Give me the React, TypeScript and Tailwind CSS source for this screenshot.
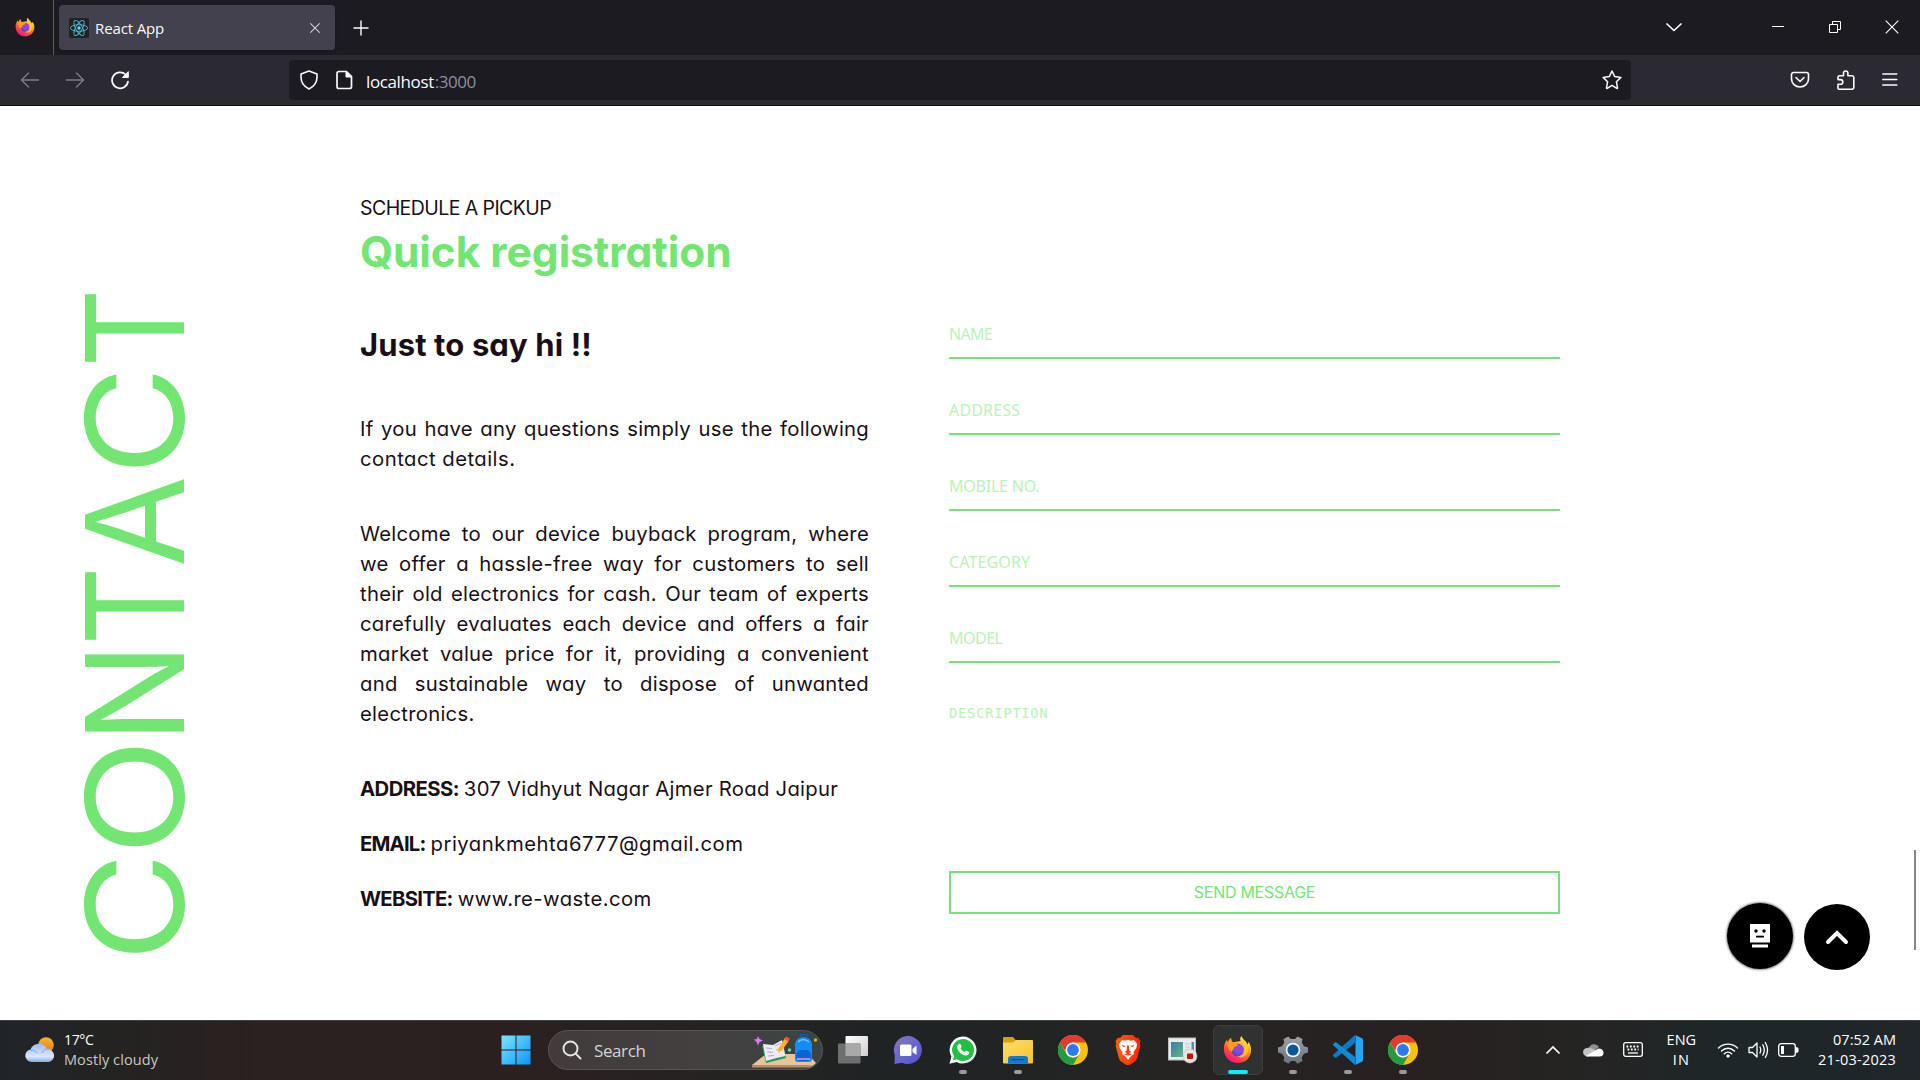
import { useLayoutEffect, useRef, useState } from "react";
import type { ReactNode } from "react";

/* One line of text whose tracking is adjusted so that it spans `w` pixels. */
function Fit({ w, className = "", children }: { w: number; className?: string; children: string }) {
  const ref = useRef<HTMLSpanElement>(null);
  const [ls, setLs] = useState(0);
  useLayoutEffect(() => {
    const el = ref.current;
    if (!el) return;
    el.style.letterSpacing = "0px";
    const next = (w - el.offsetWidth) / Math.max(1, children.length - 1);
    el.style.letterSpacing = next + "px";
    setLs(next);
  }, [w, children]);
  return (
    <span ref={ref} className={"inline-block whitespace-nowrap " + className} style={{ letterSpacing: ls }}>
      {children}
    </span>
  );
}

function Firefox({ size, id }: { size: number; id: string }) {
  return (
    <svg width={size} height={size} viewBox="0 0 32 32">
      <defs>
        <linearGradient id={id + "a"} x1="0.8" y1="0.05" x2="0.25" y2="1">
          <stop offset="0" stopColor="#fff44f" />
          <stop offset="0.3" stopColor="#ffb21f" />
          <stop offset="0.55" stopColor="#ff6b2c" />
          <stop offset="0.8" stopColor="#ff2d5c" />
          <stop offset="1" stopColor="#e31587" />
        </linearGradient>
        <radialGradient id={id + "b"} cx="0.6" cy="0.3" r="0.8">
          <stop offset="0" stopColor="#b833e1" />
          <stop offset="0.5" stopColor="#7a4ee8" />
          <stop offset="1" stopColor="#4a3fb5" />
        </radialGradient>
      </defs>
      <path
        d="M20.5 1c-2 2-1.8 4-1 5.600L11 8C9 6 9 4 9 3 7 4.500 6 6 5.600 7.800 4.700 7 4.500 6 4.500 5 1.500 8.500.8 12.500 1 16c.4 9 7 15 15.200 15C25 31 31 24.500 31 16.500c0-4-1.400-7-3-9-.1 1.500-.4 2.400-.8 3C25.500 6 21.500 5 20.500 1Z"
        fill={"url(#" + id + "a)"}
      />
      <circle cx="16" cy="16.500" r="7" fill={"url(#" + id + "b)"} />
      <path d="M5 9c2-2 5-1.500 6.500.5 2-.5 4 0 5 1-1 2.500-3.500 2-4.500 3.500-.8 1.200.2 2-1 2.500-1 .6-1.500 1-1.200 2C7 17 5 13 5 9Z" fill="#ff9a1f" />
      <path d="M20 7c3 2 4 5 3.500 9 0 5-4 8-8 7.500 6 3.500 12.500-1 12-8C27.200 10 23 9.500 20 7Z" fill="#ffcf35" opacity=".75" />
    </svg>
  );
}

function ReactLogo() {
  return (
    <svg width="20" height="20" viewBox="0 0 20 20">
      <rect width="20" height="20" rx="1.500" fill="#222222" />
      <g fill="none" stroke="#4fb9d6" strokeWidth="0.9">
        <ellipse cx="10" cy="10" rx="8.600" ry="3.300" />
        <ellipse cx="10" cy="10" rx="8.600" ry="3.300" transform="rotate(60 10 10)" />
        <ellipse cx="10" cy="10" rx="8.600" ry="3.300" transform="rotate(120 10 10)" />
      </g>
      <circle cx="10" cy="10" r="1.700" fill="#61dafb" />
    </svg>
  );
}

function Stroke({ size = 20, sw = 1.5, color = "#fbfbfe", children }: { size?: number; sw?: number; color?: string; children: ReactNode }) {
  return (
    <svg className="shrink-0" width={size} height={size} viewBox="0 0 20 20" fill="none" stroke={color} strokeWidth={sw} strokeLinecap="round" strokeLinejoin="round">
      {children}
    </svg>
  );
}

function TabBar() {
  return (
    <div className="flex h-[55px] items-center bg-[#1c1b22]">
      <div className="flex h-full w-[54px] items-center justify-center border-r border-[#5b5a63] pr-1">
        <div className="-mt-0.5">
          <Firefox size={20} id="f1" />
        </div>
      </div>
      <div className="ml-[5px] flex h-[45px] w-[276px] items-center rounded bg-[#42414d] pr-3 pl-2.5 shadow">
        <ReactLogo />
        <Fit w={69} className="mt-0.5 ml-1.5 font-['Open_Sans'] text-[15px] text-[#fbfbfe]">React App</Fit>
        <div className="ml-auto">
          <Stroke size={16} sw={1.3} color="#d0d0d8">
            <path d="M4.500 4.500l11 11M15.500 4.500l-11 11" />
          </Stroke>
        </div>
      </div>
      <div className="ml-[16px]">
        <Stroke sw={1.4}>
          <path d="M10 3v14M3 10h14" />
        </Stroke>
      </div>
      <div className="ml-auto flex items-center pr-[21px] pb-px">
        <Stroke size={20} sw={1.7}>
          <path d="M3 7l7 6.500L17 7" />
        </Stroke>
        <svg className="ml-[87px]" width="14" height="14" viewBox="0 0 14 14" stroke="#fff" fill="none">
          <path d="M1 6.500h12" />
        </svg>
        <svg className="ml-[43px]" width="14" height="14" viewBox="0 0 14 14" stroke="#fff" fill="none">
          <path d="M1.500 4.500h8v8h-8zM4.500 4V1.500h8v8H10" />
        </svg>
        <svg className="ml-[43px]" width="14" height="14" viewBox="0 0 14 14" stroke="#fff" fill="none" strokeWidth="1.100">
          <path d="M.7.7l12.600 12.600M13.300.7L.7 13.300" />
        </svg>
      </div>
    </div>
  );
}

function ToolBar() {
  return (
    <div className="flex h-[51px] items-center border-b border-[#0c0c0d] bg-[#2b2a33] pr-5 pl-5">
      <Stroke color="#7d7c84" sw={1.4}>
        <path d="M1.500 10h17M8.500 3l-7 7 7 7" />
      </Stroke>
      <div className="ml-[25px]">
        <Stroke color="#7d7c84" sw={1.4}>
          <path d="M1.500 10h17M11.500 3l7 7-7 7" />
        </Stroke>
      </div>
      <div className="ml-[25px]">
        <Stroke sw={1.7}>
          <path d="M18 11.500A8 8 0 1 1 15.600 4.500" />
          <path d="M18.300 2v5.500h-5.500z" fill="#fbfbfe" strokeWidth="1" />
        </Stroke>
      </div>
      <div className="ml-[159px] flex h-10 w-[1342px] items-center rounded bg-[#1c1b22] pr-[9px] pl-[10px]">
        <Stroke sw={1.6}>
          <path d="M10 1L18 4v3c0 5.500-3 9.500-8 12-5-2.500-8-6.500-8-12V4z" />
        </Stroke>
        <div className="ml-[15px]">
          <Stroke sw={1.7}>
            <path d="M5 1.500h7.500l5 5V16.500a2 2 0 0 1-2 2H5a2 2 0 0 1-2-2v-13a2 2 0 0 1 2-2z" />
            <path d="M12 1.500v5.500h5.500z" fill="#fbfbfe" strokeWidth="1" />
          </Stroke>
        </div>
        <span className="mt-[3px] ml-[12px] flex font-['Open_Sans'] text-[17px]">
          <Fit w={68} className="text-[#fbfbfe]">localhost</Fit>
          <Fit w={41} className="ml-px text-[#8f8f98]">:3000</Fit>
        </span>
        <div className="ml-auto">
          <Stroke sw={1.5}>
            <path d="M10 1l2.700 5.600 6.200.8-4.500 4.300 1.100 6.100c.1.500-.3.700-.7.500L10 15.400l-4.800 2.900c-.4.200-.8 0-.7-.5l1.100-6.100L1.100 7.400l6.200-.8z" />
          </Stroke>
        </div>
      </div>
      <div className="ml-[159px]">
        <Stroke sw={1.6}>
          <path d="M3.500 2.500h13a2 2 0 0 1 2 2V9a8.500 8 0 0 1-17 0V4.500a2 2 0 0 1 2-2z" />
          <path d="M6 7.500l4 4 4-4" />
        </Stroke>
      </div>
      <div className="ml-[26px]">
        <Stroke sw={1.6}>
          <path d="M3.500 5.800h4V3.200a2.200 2.200 0 0 1 4.400 0v2.600H16a1.800 1.800 0 0 1 1.800 1.800v9.800a1.800 1.800 0 0 1-1.800 1.800H3.300a1.300 1.300 0 0 1-1.300-1.300v-3.700h2.500a2.200 2.200 0 0 0 0-4.600H2V7.300a1.500 1.500 0 0 1 1.500-1.500z" />
        </Stroke>
      </div>
      <div className="ml-[24px]">
        <Stroke sw={1.5}>
          <path d="M2.800 4h14M2.800 9.500h14M2.800 15h14" />
        </Stroke>
      </div>
    </div>
  );
}

const paragraph = [
  "Welcome to our device buyback program, where",
  "we offer a hassle-free way for customers to sell",
  "their old electronics for cash. Our team of experts",
  "carefully evaluates each device and offers a fair",
  "market value price for it, providing a convenient",
  "and sustainable way to dispose of unwanted",
];

const fields: [string, number][] = [
  ["NAME", 44],
  ["ADDRESS", 71],
  ["MOBILE NO.", 91],
  ["CATEGORY", 81],
  ["MODEL", 54],
];

function Line({ children }: { children: string }) {
  return <div className="h-[30px] tracking-[0.25px] whitespace-nowrap [text-align-last:justify]">{children}</div>;
}

function Detail({ label, lw, value, vw }: { label: string; lw: number; value: string; vw: number }) {
  return (
    <div className="flex h-[55px] items-start">
      <Fit w={lw} className="font-bold">{label}</Fit>
      <Fit w={vw} className="ml-[5px]">{value}</Fit>
    </div>
  );
}

function Contact() {
  return (
    <main className="flex h-[914px] bg-white text-[#1a0f16] font-['Inter',sans-serif] [font-feature-settings:'cv11']">
      <div className="mt-[179px] ml-[82px] flex h-[680px] w-[103px] items-center justify-center">
        <div className="flex w-[680px] shrink-0 -rotate-90 text-[136px] leading-[103px] font-[380] text-[#72e572]">
          <span className="flex w-[117px] shrink-0 scale-x-[1.1] justify-center">C</span>
          <span className="flex w-[103px] shrink-0 scale-x-[1.12] justify-center">O</span>
          <span className="flex w-[100px] shrink-0 scale-x-[0.98] justify-center pl-[5px]">N</span>
          <span className="flex w-[79px] shrink-0 scale-x-[0.9] justify-center">T</span>
          <span className="flex w-[90px] shrink-0 scale-x-[0.97] justify-center">A</span>
          <span className="flex w-[106px] shrink-0 scale-x-[1.1] justify-center pl-[5px]">C</span>
          <span className="flex w-[85px] shrink-0 scale-x-[0.9] justify-center">T</span>
        </div>
      </div>

      <div className="ml-[175px] flex w-[509px] shrink-0 flex-col pt-[87px] text-[20.3px] leading-[30px]">
        <Fit w={192} className="h-[31px] self-start text-[19.5px] leading-[31px]">SCHEDULE A PICKUP</Fit>
        <Fit w={372} className="-mt-[2px] h-[60px] self-start text-[42.5px] leading-[60px] font-bold text-[#72e572]">Quick registration</Fit>
        <Fit w={232} className="mt-[40px] h-[46px] self-start text-[31px] leading-[46px] font-bold">Just to say hi !!</Fit>
        <div className="mt-[46px]">
          <Line>If you have any questions simply use the following</Line>
          <Fit w={155} className="h-[30px]">contact details.</Fit>
        </div>
        <div className="mt-[45px]">
          {paragraph.map((l) => (
            <Line key={l}>{l}</Line>
          ))}
          <Fit w={114} className="h-[30px]">electronics.</Fit>
        </div>
        <div className="mt-[45px]">
          <Detail label="ADDRESS:" lw={99} value="307 Vidhyut Nagar Ajmer Road Jaipur" vw={374} />
          <Detail label="EMAIL:" lw={66} value="priyankmehta6777@gmail.com" vw={312} />
          <Detail label="WEBSITE:" lw={93} value="www.re-waste.com" vw={194} />
        </div>
      </div>

      <form className="ml-[80px] flex w-[611px] shrink-0 flex-col pt-[177px]">
        {fields.map(([name, w]) => (
          <div key={name} className="mt-[32px] h-[44px] border-b-2 border-[#72e572] pt-[8px] font-['Noto_Sans'] text-[16px] leading-[22px] text-[#b9f2b9] first:mt-0 [&:first-child]:h-[76px] [&:first-child]:pt-[40px]">
            <Fit w={w}>{name}</Fit>
          </div>
        ))}
        <div className="mt-[39px] h-[169px] font-['DejaVu_Sans_Mono'] text-[14px] leading-[22px] text-[#b9f2b9]">
          <Fit w={99}>DESCRIPTION</Fit>
        </div>
        <div className="flex h-[43px] items-center justify-center border-2 border-[#72e572] pb-[2px] text-[16px] text-[#72e572]">
          <Fit w={122}>SEND MESSAGE</Fit>
        </div>
      </form>

      <div className="ml-[167px] flex h-full items-start pt-[797px]">
        <div className="flex h-[66px] w-[66px] items-center justify-center rounded-full bg-black shadow-[0_0_2px_1px_#8a8a8a]">
          <svg width="20" height="24" viewBox="0 0 20 24" fill="#fff">
            <path d="M0 0h20v18.500H0zM2 20.500h16v3H2z" />
            <circle cx="6" cy="7" r="1.700" fill="#000" />
            <circle cx="14" cy="7" r="1.700" fill="#000" />
            <path d="M6 11.700h8v1.800H6z" fill="#000" />
          </svg>
        </div>
        <div className="mt-[1px] ml-[11px] flex h-[66px] w-[66px] items-center justify-center rounded-full bg-black">
          <svg width="24" height="16" viewBox="0 0 24 16" fill="none" stroke="#fff" strokeWidth="4" strokeLinecap="round">
            <path d="M3 13l9-9 9 9" />
          </svg>
        </div>
      </div>
      <div className="mt-[744px] ml-auto h-[100px] w-[6px] shrink-0 pr-1">
        <div className="h-full w-[2px] bg-[#86868a]" />
      </div>
    </main>
  );
}

function Chrome() {
  return (
    <svg width="30" height="30" viewBox="0 0 30 30">
      <circle cx="15" cy="15" r="15" fill="#f9bf0b" />
      <path d="M2 7.500A15 15 0 0 1 28 7.500H15L9 18.500z" fill="#e33b2e" />
      <path d="M2 7.500A15 15 0 0 0 15 30L21.500 18.700A7.500 7.500 0 0 1 8.500 18.700z" fill="#259a45" />
      <circle cx="15" cy="15" r="7.500" fill="#fff" />
      <circle cx="15" cy="15" r="5.900" fill="#2d7af0" />
    </svg>
  );
}

function TaskView() {
  return (
    <svg width="30" height="28" viewBox="0 0 30 28">
      <defs>
        <linearGradient id="tv" x1="0" y1="0" x2="1" y2="1">
          <stop offset="0" stopColor="#fff" />
          <stop offset="1" stopColor="#cfcfcf" />
        </linearGradient>
      </defs>
      <rect x="7.500" y="0" width="22.500" height="20" rx="1" fill="url(#tv)" />
      <rect x="0" y="7.500" width="22.500" height="20" rx="1" fill="#6f6f6f" />
      <rect x="7.500" y="7.500" width="15" height="12.500" fill="#a9a9a9" />
    </svg>
  );
}

function Chat() {
  return (
    <svg width="30" height="30" viewBox="0 0 30 30">
      <defs>
        <linearGradient id="ch" x1="0" y1="0" x2="1" y2="1">
          <stop offset="0" stopColor="#8a76b8" />
          <stop offset="0.6" stopColor="#6263d0" />
          <stop offset="1" stopColor="#4f55c4" />
        </linearGradient>
      </defs>
      <path d="M15 1a14 14 0 1 1-6 26.700L1.500 29 1.800 20A14 14 0 0 1 15 1z" fill="url(#ch)" />
      <rect x="7" y="9.500" width="11.500" height="11.500" rx="1.500" fill="#fff" />
      <path d="M19.500 14l4-3.500v9.500l-4-3z" fill="#fff" />
    </svg>
  );
}

function WhatsApp() {
  return (
    <svg width="28" height="28" viewBox="0 0 28 28">
      <path d="M14 .5A13.500 13.500 0 1 1 7.600 25.900L.5 27.700l1.900-6.900A13.500 13.500 0 0 1 14 .5z" fill="#fff" />
      <path d="M14 3A11 11 0 1 1 8 23.200l-4 1 1.100-3.900A11 11 0 0 1 14 3z" fill="#20c045" />
      <path d="M9.900 8c.6-.5 1.300-.4 1.600.3l.9 2c.2.500-.1.900-.9 1.900 1 1.900 2.400 3 4.300 3.800.9-1.300 1.300-1.500 1.800-1.200l2 1c.6.300.6.500.5 1-.3 1.900-1.900 2.900-3.700 2.700-4-.4-8.200-4.800-8.200-8.200 0-1.500.7-2.500 1.700-3.300z" fill="#fff" />
    </svg>
  );
}

function Explorer() {
  return (
    <svg width="30" height="28" viewBox="0 0 30 28">
      <defs>
        <linearGradient id="ex" x1="0" y1="0" x2="1" y2="1">
          <stop offset="0" stopColor="#ffdc6a" />
          <stop offset="1" stopColor="#f9c12e" />
        </linearGradient>
      </defs>
      <path d="M0 2a1 1 0 0 1 1-1h9l3 3.500h16v4H0z" fill="#dd9d0c" />
      <path d="M0 6.500h10l3-2.500h16a1 1 0 0 1 1 1v21.500a1 1 0 0 1-1 1H1a1 1 0 0 1-1-1z" fill="url(#ex)" />
      <path d="M5 27.500V23a3 3 0 0 1 3-3h14a3 3 0 0 1 3 3v4.500z" fill="#1579cf" />
      <path d="M8.500 23.700h13" stroke="#0b4f91" strokeWidth="1.200" />
    </svg>
  );
}

function Brave() {
  return (
    <svg width="26" height="30" viewBox="0 0 26 30">
      <defs>
        <linearGradient id="br">
          <stop offset="0" stopColor="#ff5a1c" />
          <stop offset="1" stopColor="#ff2600" />
        </linearGradient>
      </defs>
      <path d="M8 0h10l3 3 2-.3L25.500 6l-.8 3 .8 1.500-3.500 13c-.6 1.700-1.500 2.500-3 3.500l-4.500 3q-1.500.6-3 0L7 27c-1.500-1-2.400-1.800-3-3.500L.5 10.500 1.300 9 .5 6 3 2.700 5 3z" fill="url(#br)" />
      <path d="M4 9l3-4 3 .7 3-.9 3 .9 3-.7 3 4-.6 4-2.900 4 .5 2-2.500 1.500L13 25l-3.500-4.500L7 19l.5-2-2.900-4z" fill="#fff" />
      <path d="M6.500 10l4.500 1-2.500 1zM19.500 10L15 11l2.500 1zM12 10.500h2l.3 5 2 1.200-3.300 2.200-3.300-2.200 2-1.200zM9 19.500l4-1.700 4 1.700-4 1z" fill="#ff3f0a" />
    </svg>
  );
}

function Recorder() {
  return (
    <svg width="30" height="28" viewBox="0 0 30 28">
      <defs>
        <linearGradient id="rc" x1="0" y1="0" x2="1" y2="1">
          <stop offset="0" stopColor="#3b7fa0" />
          <stop offset="1" stopColor="#63b28a" />
        </linearGradient>
      </defs>
      <rect x=".5" y="2" width="27" height="22" fill="#e8ecee" stroke="#b8bec2" />
      <rect x="3" y="6" width="12" height="15" fill="url(#rc)" />
      <path d="M17 8h5M17 11h5M17 14h4" stroke="#c2c8cc" />
      <rect x="23.500" y="6" width="2.500" height="9" fill="#4a92a0" />
      <circle cx="22" cy="20" r="7" fill="#e6e6e6" stroke="#bdbdbd" strokeWidth=".6" />
      <rect x="19" y="17.500" width="6" height="5.500" rx=".8" fill="#d30a0a" />
    </svg>
  );
}

function Gear() {
  return (
    <svg width="30" height="30" viewBox="0 0 30 30">
      <defs>
        <linearGradient id="ge" x1="0" y1="0" x2="0" y2="1">
          <stop offset="0" stopColor="#9aa1a8" />
          <stop offset="1" stopColor="#68727d" />
        </linearGradient>
      </defs>
      <path d="M11.500 3l-1-1.500L5.500 4l.8 3.500-2.300 3.800L0 12.500v5l4 1.200 2.300 3.800-.8 3.500 5 2.800 2.500-2.800h4l2.500 2.800 5-2.800-.8-3.500 2.300-3.800 4-1.200v-5l-4-1.200-2.300-3.800.8-3.500-5-2.500L17 4h-4z" fill="url(#ge)" />
      <circle cx="15" cy="15" r="7.300" fill="#f3f5f7" />
      <circle cx="15" cy="15" r="5.600" fill="#0c569f" />
    </svg>
  );
}

function Code() {
  return (
    <svg width="30" height="30" viewBox="0 0 30 30">
      <path d="M22 8L3.500 22.500a1.500 1.500 0 0 1-1.800 0L.4 21.200a1.200 1.200 0 0 1 0-1.800L22 0z" fill="#0f7ac4" />
      <path d="M22 22L3.500 7.500a1.500 1.500 0 0 0-1.800 0L.4 8.800a1.200 1.200 0 0 0 0 1.800L22 30z" fill="#1389d6" />
      <path d="M22 0l7 3.200a1.800 1.800 0 0 1 1 1.600v20.400a1.800 1.800 0 0 1-1 1.600L22 30c.4-.5.500-1 .5-1.500v-27c0-.5-.1-1-.5-1.500z" fill="#27a5f3" />
    </svg>
  );
}

function SearchArt() {
  return (
    <svg width="66" height="34" viewBox="0 0 66 34">
      <path d="M0 31L14 20h42l8 9q-3 3-6 4H0z" fill="#e8c49a" />
      <path d="M0 31h60l-2 2.500H0z" fill="#b88f62" />
      <path d="M6 2l1.500 3L11 6.500 7.500 8 6 11.500 4.500 8 2 5.500l3-.5z" fill="#e07af0" />
      <path d="M10 12l11 1 9-6 4 17-20 5z" fill="#1f9d55" />
      <path d="M11 10l10 1 9-5 3.500 16-9 2-10.500 3z" fill="#efeaf6" />
      <path d="M14 14l6 .5M15 18l6 .3M16 22l6-.5M23 12l6-3M24 16l6-2" stroke="#b3a6cc" />
      <path d="M26 15l7-11 4 2.500-7 10-4 2z" fill="#ffb02e" />
      <path d="M32 5l2-2.500 4 2-2 3z" fill="#f0503c" />
      <circle cx="37.500" cy="16" r="1.700" fill="#6ed0e8" />
      <circle cx="63.500" cy="6" r="1.700" fill="#ffa60a" />
      <path d="M43 9a9 9 0 0 1 17 0v16a3 3 0 0 1-3 3H46a3 3 0 0 1-3-3z" fill="#138cf5" />
      <path d="M48 3q0-3 3.500-3T55 3" fill="none" stroke="#0c59b8" strokeWidth="1.500" />
      <path d="M46 8q5-5 11 0" fill="none" stroke="#7cc8ff" strokeWidth="1.500" />
      <rect x="44" y="16" width="15" height="11" rx="5" fill="#0f62d6" />
      <path d="M45 25h13" stroke="#d99af0" strokeWidth="1.500" />
    </svg>
  );
}

function Cell({ children, mark = "" }: { children: ReactNode; mark?: string }) {
  return (
    <div className="flex h-[60px] w-[55px] shrink-0 items-center justify-center">
      <div className={"relative flex h-[50px] w-[50px] items-center justify-center rounded-md border " + (mark === "active" ? "border-[#3c3d3d] bg-[#303232]" : "border-transparent")}>
        {children}
        {mark === "run" && <div className="absolute bottom-0 h-1 w-2 rounded-full bg-[#9a9a9a]" />}
        {mark === "active" && <div className="absolute bottom-0 h-1 w-5 rounded-full bg-[#00f0ff]" />}
      </div>
    </div>
  );
}

function TaskBar() {
  return (
    <div className="flex h-[60px] items-center border-t border-[#3c4242] bg-[linear-gradient(90deg,#20242a_0px,#232322_100px,#2a2120_260px,#2b2020_500px,#242322_740px,#1f2324_900px,#242423_1140px,#272120_1440px,#232524_1620px,#1d2628_1720px,#20262a_1920px)] pb-[2px] font-['Open_Sans'] text-[14px] leading-5 text-white">
      <div className="flex w-[501px] shrink-0 items-center pl-[25px]">
        <svg width="31" height="26" viewBox="0 0 31 26">
          <defs>
            <linearGradient id="cl" x1="0" y1="0" x2="0" y2="1">
              <stop offset="0" stopColor="#9dbdf0" />
              <stop offset="0.7" stopColor="#dbe7fb" />
              <stop offset="1" stopColor="#86a8e2" />
            </linearGradient>
            <linearGradient id="su" x1="0" y1="0" x2="0" y2="1">
              <stop offset="0" stopColor="#f7b52c" />
              <stop offset="1" stopColor="#ee7a12" />
            </linearGradient>
          </defs>
          <circle cx="21" cy="8" r="7.800" fill="url(#su)" />
          <path d="M6.500 25a6.300 6.300 0 0 1-1-12.500A9 9 0 0 1 22 12a6.600 6.600 0 0 1 2 13z" fill="url(#cl)" />
          <path d="M5 13.500q5-1 7 3M17 16q2-4.500 7-4" stroke="#84a5de" fill="none" />
        </svg>
        <div className="ml-2 flex flex-col items-start">
          <Fit w={30}>17°C</Fit>
          <Fit w={94} className="text-[14.5px] text-[#c9c7c5]">Mostly cloudy</Fit>
        </div>
      </div>
      <svg className="shrink-0" width="30" height="30" viewBox="0 0 30 30">
        <defs>
          <linearGradient id="wi" gradientUnits="userSpaceOnUse" x1="0" y1="0" x2="30" y2="30">
            <stop offset="0" stopColor="#7de8fb" />
            <stop offset="1" stopColor="#0a93fb" />
          </linearGradient>
        </defs>
        <path d="M1 .5h13.500v14H.500V1zM15.500.500H29.500v14h-14zM.500 15.500h14v14H.500zM15.500 15.500h14v14h-14z" fill="url(#wi)" />
      </svg>
      <div className="ml-[17px] flex h-10 w-[275px] shrink-0 items-center rounded-full border border-[#5a5555] bg-[linear-gradient(90deg,#433b3b,#434040_60%,#3a4444)] pl-[13px]">
        <svg width="20" height="20" viewBox="0 0 20 20" fill="none" stroke="#e6e6e6" strokeWidth="1.900" strokeLinecap="round">
          <circle cx="8.500" cy="8.500" r="7" />
          <path d="M13.700 13.700l4.800 4.800" />
        </svg>
        <Fit w={52} className="mt-0.5 ml-[12px] text-[17px] text-[#d6d4d4]">Search</Fit>
        <div className="ml-auto pt-0.5 pr-[4px]">
          <SearchArt />
        </div>
      </div>
      <div className="ml-[2px] flex">
        <Cell><TaskView /></Cell>
        <Cell><Chat /></Cell>
        <Cell mark="run"><WhatsApp /></Cell>
        <Cell mark="run"><Explorer /></Cell>
        <Cell><Chrome /></Cell>
        <Cell><Brave /></Cell>
        <Cell><Recorder /></Cell>
        <Cell mark="active"><Firefox size={29} id="f2" /></Cell>
        <Cell mark="run"><Gear /></Cell>
        <Cell mark="run"><Code /></Cell>
        <Cell mark="run"><Chrome /></Cell>
      </div>
      <div className="ml-auto flex items-center pr-6">
        <svg width="16" height="10" viewBox="0 0 16 10" fill="none" stroke="#fff" strokeWidth="1.700">
          <path d="M1.500 8.500L8 2l6.500 6.500" />
        </svg>
        <svg className="ml-[22px]" width="21" height="14" viewBox="0 0 21 14">
          <path d="M6 5a5.500 5.500 0 0 1 10-1l-6 5-6 .500z" fill="#8f8f8f" />
          <path d="M4.500 13.500a4.300 4.300 0 0 1-.3-8.600Q7 4 9 5.500L17 10z" fill="#c4c4c4" />
          <path d="M3 13L15.500 5.500q4.500 0 5 4 0 4-4 4H4.500q-1 0-1.500-.5z" fill="#fff" />
        </svg>
        <svg className="ml-[19px]" width="20" height="15" viewBox="0 0 20 15" fill="none" stroke="#fff" strokeWidth="1.300">
          <rect x=".7" y=".7" width="18.600" height="13.600" rx="2" />
          <path d="M3.500 4.500h13M4.500 7.500h11" strokeWidth="1.800" strokeDasharray="1.800 1.600" />
          <path d="M5 11h10" />
        </svg>
        <div className="ml-[24px] flex flex-col items-center">
          <Fit w={30} className="text-[14.5px]">ENG</Fit>
          <Fit w={16} className="text-[14.5px]">IN</Fit>
        </div>
        <svg className="ml-[21px]" width="22" height="16" viewBox="0 0 22 16" fill="none" stroke="#fff" strokeWidth="1.400" strokeLinecap="round">
          <path d="M1.500 6a13.500 13.500 0 0 1 19 0M4.500 9a9 9 0 0 1 13 0M7.300 11.700a5.200 5.200 0 0 1 7.400 0" />
          <circle cx="11" cy="14" r="1.300" fill="#fff" strokeWidth=".8" />
        </svg>
        <svg className="ml-[9px]" width="21" height="18" viewBox="0 0 21 18" fill="none" stroke="#fff" strokeWidth="1.300" strokeLinecap="round" strokeLinejoin="round">
          <path d="M1 6.500h3.500L9 2v14l-4.500-4.500H1zM12 6q1.500 3 0 6M14.800 3.800q3 5.200 0 10.400M17.300 1.500q4.500 7.500 0 15" />
        </svg>
        <svg className="ml-[9px]" width="21" height="14" viewBox="0 0 21 14" fill="none" stroke="#fff" strokeWidth="1.300">
          <rect x=".7" y=".7" width="16.600" height="12.600" rx="2.500" />
          <path d="M4.500 3v8" strokeWidth="3" />
          <path d="M18.500 4.500l1.500.7v3.600l-1.500.7z" fill="#fff" strokeWidth="1" />
        </svg>
        <div className="ml-[19px] flex flex-col items-end">
          <Fit w={63} className="text-[14.5px]">07:52 AM</Fit>
          <Fit w={78} className="text-[14.5px]">21-03-2023</Fit>
        </div>
      </div>
    </div>
  );
}

export default function App() {
  return (
    <div className="h-[1080px] w-[1920px] overflow-hidden">
      <TabBar />
      <ToolBar />
      <Contact />
      <TaskBar />
    </div>
  );
}
